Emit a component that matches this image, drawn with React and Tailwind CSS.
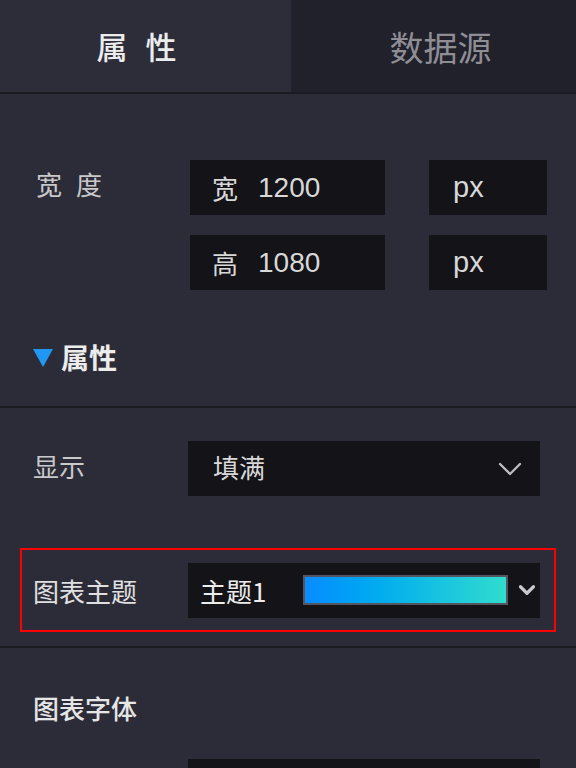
import { ChevronDown } from "lucide-react";

const font = { fontFamily: '"Noto Sans CJK SC", "Noto Sans", sans-serif' };
const latin = { fontFamily: '"Liberation Sans", "Noto Sans CJK SC", sans-serif' };

function Tabs() {
  return (
    <div className="flex h-[94px] border-b-2 border-[#1b1b22]">
      <div className="w-[291px] bg-[#2d2d3a] flex items-center justify-center text-[31px] font-medium text-[#ececec] tracking-[18px]">
        属性
      </div>
      <div className="flex-1 bg-[#21212c] flex items-center justify-center pl-[14px] text-[34px] text-[#8e8e94]">
        数据源
      </div>
    </div>
  );
}

function Box({ children, className }) {
  return (
    <div
      className={
        "h-[55px] bg-[#131318] flex items-center text-[26px] text-[#d8d8d8] " +
        className
      }
    >
      {children}
    </div>
  );
}

export default function App() {
  return (
    <div className="w-[576px] h-[768px] overflow-hidden bg-[#2c2c38]" style={font}>
      <Tabs />

      {/* 宽度 */}
      <div className="flex pt-[66px]">
        <div className="w-[190px] pl-[36px] pt-[4px] text-[26px] tracking-[14px] text-[#c9c9cc]">
          宽度
        </div>
        <div className="flex flex-col gap-[20px]">
          <div className="flex gap-[44px]">
            <Box className="w-[195px] pl-[22px]">
              <span className="mr-[20px]">宽</span>
              <span className="text-[28px]" style={latin}>1200</span>
            </Box>
            <Box className="w-[118px] pl-[24px]">
              <span className="text-[29px]" style={latin}>px</span>
            </Box>
          </div>
          <div className="flex gap-[44px]">
            <Box className="w-[195px] pl-[22px]">
              <span className="mr-[20px]">高</span>
              <span className="text-[28px]" style={latin}>1080</span>
            </Box>
            <Box className="w-[118px] pl-[24px]">
              <span className="text-[29px]" style={latin}>px</span>
            </Box>
          </div>
        </div>
      </div>

      {/* ▼属性 */}
      <div className="flex items-center h-[66px] mt-[34px] pl-[33px] border-b-2 border-[#1b1b22] pb-[16px] box-content">
        <svg width="20" height="20" viewBox="0 0 20 20" className="mr-[8px]">
          <polygon points="0,2 20,2 10,20" fill="#2196f3" />
        </svg>
        <span className="text-[28px] font-bold text-[#ececec]">属性</span>
      </div>

      {/* 显示 */}
      <div className="flex items-center mt-[33px]">
        <div className="w-[188px] pl-[33px] pb-[6px] text-[26px] text-[#c9c9cc]">显示</div>
        <Box className="w-[352px] pl-[25px] justify-between pr-[10px]">
          <span className="pb-[4px]">填满</span>
          <ChevronDown className="w-[40px] h-[40px] text-[#bdbdc2]" strokeWidth={1.4} />
        </Box>
      </div>

      {/* 图表主题 */}
      <div className="mx-[20px] mt-[52px] h-[84px] border-2 border-[#ff0000] flex items-center">
        <div className="w-[166px] pl-[11px] text-[26px] text-[#e0e0e0]">图表主题</div>
        <Box className="w-[352px] pl-[12px]">
          <span className="w-[103px] text-[#ececec]">主题1</span>
          <div className="w-[206px] h-[30px] border-2 border-[#55555f] bg-gradient-to-r from-[#0a8cff] to-[#30dccc]" />
          <ChevronDown className="ml-[6px] w-[26px] h-[26px] text-[#c9c9cc]" strokeWidth={3} />
        </Box>
      </div>

      <div className="mt-[14px] border-b-2 border-[#1b1b22]" />

      {/* 图表字体 */}
      <div className="pl-[33px] pt-[40px] text-[26px] font-medium text-[#e6e6e6]">图表字体</div>

      <div className="flex items-start mt-[32px]">
        <div className="w-[188px] pl-[33px] text-[26px] leading-[30px] text-[#c9c9cc] pt-[6px]">图表大小</div>
        <Box className="w-[352px]" />
      </div>
    </div>
  );
}
